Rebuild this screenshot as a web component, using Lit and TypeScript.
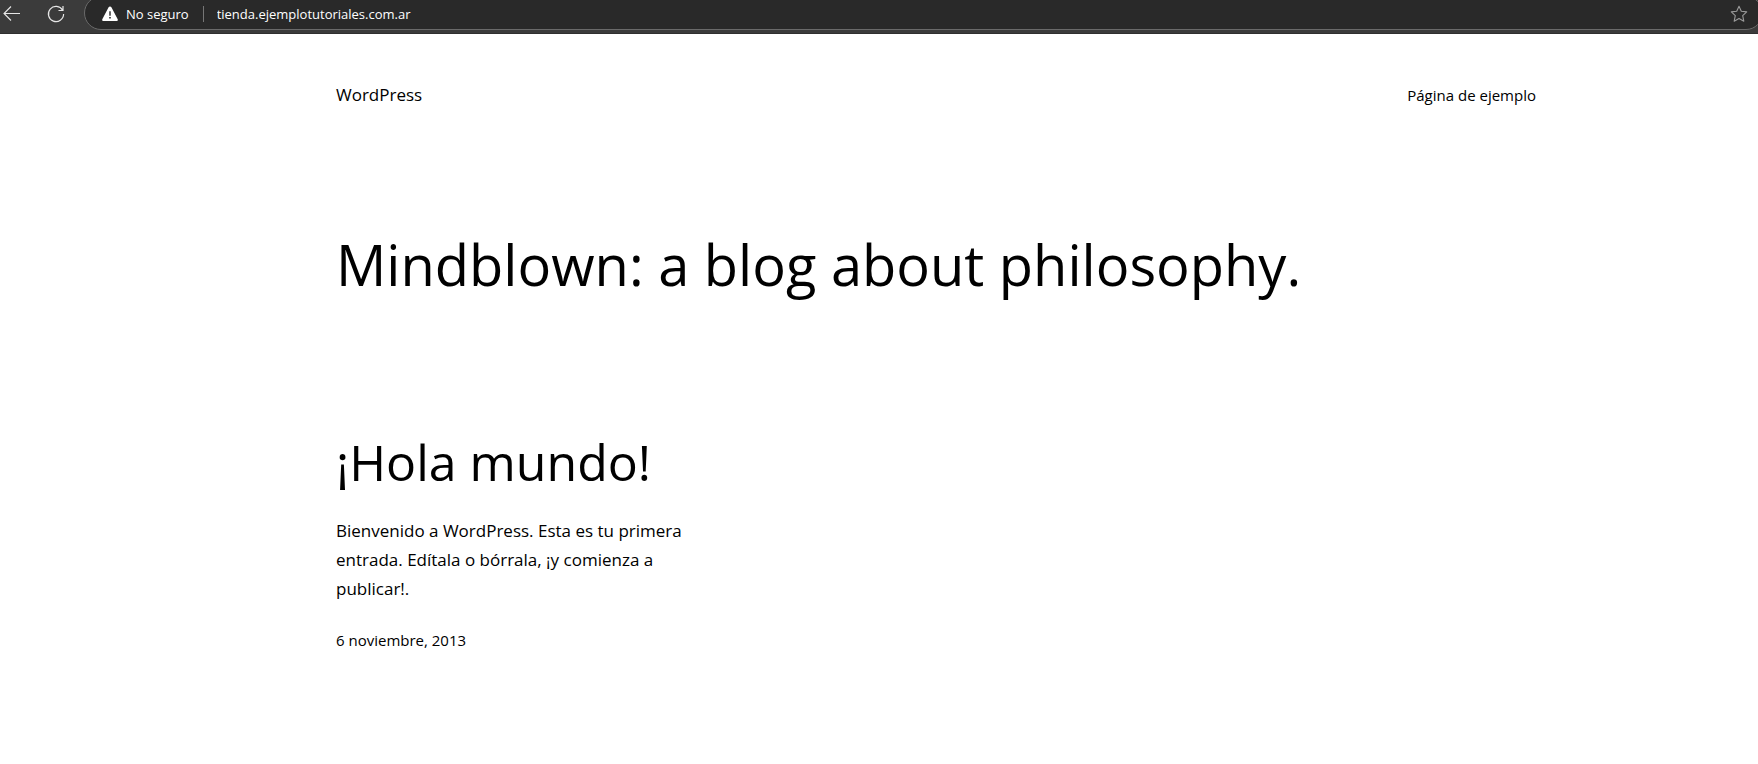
import { LitElement, html, css } from "lit";
import { customElement } from "lit/decorators.js";

@customElement("browser-bar")
class BrowserBar extends LitElement {
  static styles = css`
    :host {
      display: block;
      font-family: "Open Sans", "Noto Sans", sans-serif;
    }
    .bar {
      box-sizing: border-box;
      height: 34px;
      display: flex;
      align-items: flex-start;
      overflow: hidden;
      background: #3b3b3b;
      border-bottom: 1px solid #2f2f2f;
    }
    button {
      border: 0;
      padding: 0;
      background: none;
      color: #e6e6e6;
      display: block;
    }
    svg {
      display: block;
    }
    .nav {
      display: flex;
      gap: 24px;
      padding: 4px 18px 0 2px;
    }
    .field {
      box-sizing: border-box;
      flex: 1;
      min-width: 0;
      height: 34px;
      margin: -4px -5px 0 0;
      padding: 2px 14px 0 16px;
      display: flex;
      align-items: center;
      border: 1px solid #6a6a6a;
      border-radius: 17px;
      background: #292929;
      color: #fff;
    }
    .warning {
      flex: none;
      margin-right: 7px;
    }
    .security {
      font-size: 13px;
      line-height: 18px;
      white-space: nowrap;
      color: #fff;
      font-family: inherit;
    }
    .divider {
      width: 1px;
      height: 16px;
      margin: 0 13px 0 14px;
      background: #767676;
    }
    .url {
      flex: 1;
      min-width: 0;
      padding: 0;
      border: 0;
      outline: 0;
      background: none;
      color: #fff;
      font-family: inherit;
      font-size: 13px;
      line-height: 18px;
    }
    .star {
      color: #9a9a9a;
    }
  `;

  render() {
    return html`
      <header class="bar">
        <div class="nav">
          <button aria-label="Atrás">
            <svg width="20" height="20" viewBox="0 0 20 20" fill="none" stroke="currentColor" stroke-width="1.1">
              <path d="M18 9.5H2.5M9 2.5l-7 7 7 7" />
            </svg>
          </button>
          <button aria-label="Actualizar">
            <svg width="20" height="20" viewBox="0 0 20 20" fill="none" stroke="currentColor" stroke-width="1.2">
              <path d="M16.6 6.2A7.6 7.6 0 1 0 17.6 10M17 2v4.5h-4.5" />
            </svg>
          </button>
        </div>
        <div class="field">
          <svg class="warning" width="18" height="16" viewBox="0 0 18 16">
            <path
              d="M7.6 1.3a1.6 1.6 0 0 1 2.8 0l6.3 11.9a1.3 1.3 0 0 1-1.2 1.9H2.5a1.3 1.3 0 0 1-1.2-1.9z"
              fill="#fff"
            />
            <path d="M8.3 5.2h1.4v4.6H8.3zM8.2 11h1.6v1.6H8.2z" fill="#292929" />
          </svg>
          <button class="security">No seguro</button>
          <span class="divider"></span>
          <input class="url" type="text" aria-label="Dirección" value="tienda.ejemplotutoriales.com.ar" />
          <button class="star" aria-label="Agregar a favoritos">
            <svg width="18" height="18" viewBox="0 0 18 18" fill="none" stroke="currentColor" stroke-width="1.1" stroke-linejoin="round">
              <path d="M9 1.2l2.3 5 5.4.7-4 3.7 1.1 5.6L9 13.5l-4.8 2.7 1.1-5.6-4-3.7 5.4-.7z" />
            </svg>
          </button>
        </div>
      </header>
    `;
  }
}

@customElement("app-root")
class AppRoot extends LitElement {
  static styles = css`
    :host {
      display: block;
      min-height: 100vh;
      background: #fff;
      color: #000;
      font-family: "Open Sans", "Noto Sans", sans-serif;
    }
    .page {
      display: grid;
      grid-template-columns: 336fr minmax(0, 1200px) 222fr;
    }
    .content {
      grid-column: 2;
    }
    a {
      color: inherit;
      text-decoration: none;
    }
    h1,
    h2,
    p {
      margin: 0;
      font-weight: 400;
    }
    .site-header {
      display: flex;
      justify-content: space-between;
      align-items: baseline;
      padding-top: 46px;
      line-height: 29px;
    }
    .site-title,
    .excerpt {
      font-size: 17px;
      line-height: 29px;
    }
    .menu,
    .date {
      font-size: 15px;
      line-height: 26px;
    }
    .headline {
      margin-top: 121px;
      font-size: 56px;
      line-height: 68px;
    }
    .posts {
      display: grid;
      grid-template-columns: repeat(3, minmax(0, 1fr));
      gap: 48px;
      margin-top: 134px;
    }
    .post-title {
      font-size: 50px;
      line-height: 60px;
    }
    .excerpt,
    .date {
      margin-top: 24px;
    }
    .date {
      display: block;
    }
  `;

  render() {
    return html`
      <browser-bar></browser-bar>
      <div class="page">
        <div class="content">
          <header class="site-header">
            <a class="site-title" href="#">WordPress</a>
            <nav class="menu"><a href="#">Página de ejemplo</a></nav>
          </header>
          <main>
            <h1 class="headline">Mindblown: a blog about philosophy.</h1>
            <div class="posts">
              <article>
                <h2 class="post-title"><a href="#">¡Hola mundo!</a></h2>
                <p class="excerpt">
                  Bienvenido a WordPress. Esta es tu primera entrada. Edítala o bórrala, ¡y comienza a publicar!.
                </p>
                <a class="date" href="#"><time datetime="2013-11-06">6 noviembre, 2013</time></a>
              </article>
            </div>
          </main>
        </div>
      </div>
    `;
  }
}
